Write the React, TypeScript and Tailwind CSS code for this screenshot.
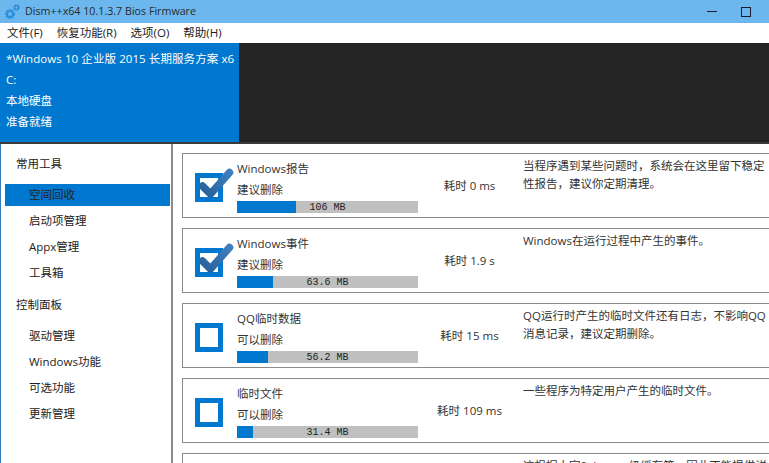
import React from 'react';

const font = { fontFamily: '"Open Sans", "Noto Sans CJK SC", sans-serif' };

const tools = ['空间回收', '启动项管理', 'Appx管理', '工具箱'];
const panel = ['驱动管理', 'Windows功能', '可选功能', '更新管理'];

const items = [
  { title: 'Windows报告', state: '建议删除', size: '106 MB', fill: 59, time: '耗时 0 ms', checked: true, desc: ['当程序遇到某些问题时，系统会在这里留下稳定', '性报告，建议你定期清理。'] },
  { title: 'Windows事件', state: '建议删除', size: '63.6 MB', fill: 36, time: '耗时 1.9 s', checked: true, desc: ['Windows在运行过程中产生的事件。'] },
  { title: 'QQ临时数据', state: '可以删除', size: '56.2 MB', fill: 31, time: '耗时 15 ms', checked: false, desc: ['QQ运行时产生的临时文件还有日志，不影响QQ', '消息记录，建议定期删除。'] },
  { title: '临时文件', state: '可以删除', size: '31.4 MB', fill: 16, time: '耗时 109 ms', checked: false, desc: ['一些程序为特定用户产生的临时文件。'] },
  { title: '', state: '', size: '', fill: 0, time: '', checked: false, desc: ['这根据大家0ghz，一级缓存等，因此不能提供详'] },
];

function CheckBox({ checked }: { checked: boolean }) {
  return (
    <div className="relative w-[28px] h-[29px] border-[5px] border-[#0078d0] bg-white shrink-0">
      {checked && (
        <svg className="absolute left-[-4px] top-[-13px]" width="42" height="36" viewBox="0 0 42 36">
          <defs>
            <linearGradient id="tick" x1="0" y1="1" x2="1" y2="0">
              <stop offset="0" stopColor="#27619b" />
              <stop offset="1" stopColor="#3f7fbd" />
            </linearGradient>
          </defs>
          <path d="M6.5 21 L14.5 29 L33.5 7.5" fill="none" stroke="url(#tick)" strokeWidth="7.5" strokeLinecap="round" strokeLinejoin="round" />
        </svg>
      )}
    </div>
  );
}

function Card({ item }: { item: (typeof items)[number] }) {
  return (
    <div className="h-[65px] shrink-0 border border-[#8a8a8a] bg-white flex text-[#333]">
      <div className="w-[54px] pl-[12px] pt-[19px] shrink-0">
        {item.title && <CheckBox checked={item.checked} />}
      </div>
      <div className="w-[181px] shrink-0 pt-[6px]">
        <div className="h-[18px] leading-[18px]">{item.title}</div>
        <div className="h-[18px] leading-[18px] mt-[3px]">{item.state}</div>
        {item.size && (
          <div className="relative h-[12px] mt-[2px] bg-[#c0c0c0]">
            <div className="h-full bg-[#0078d0]" style={{ width: item.fill }} />
            <div className="absolute inset-0 text-center text-[10px] leading-[13px] text-[#222]" style={{ fontFamily: '"Liberation Mono", monospace' }}>
              {item.size}
            </div>
          </div>
        )}
      </div>
      <div className="w-[104px] shrink-0 flex items-center justify-center pt-[1px] pr-[1px]">{item.time}</div>
      <div className="flex-1 pt-[3px] leading-[18px] whitespace-nowrap pl-[1px]">
        {item.desc.map((line) => (
          <div key={line}>{line}</div>
        ))}
      </div>
    </div>
  );
}

export default function App() {
  return (
    <div className="w-[769px] h-[463px] overflow-hidden flex flex-col bg-white text-[11.5px]" style={font}>
      {/* title bar */}
      <div className="h-[23px] shrink-0 bg-[#6cb8ee] flex items-center text-[#2a2a2a]">
        <svg className="ml-[5px] shrink-0" width="15" height="15" viewBox="0 0 15 15">
          <circle cx="5" cy="10" r="3" fill="none" stroke="#2a8fdc" strokeWidth="2" />
          <circle cx="5" cy="10" r="4.4" fill="none" stroke="#2a8fdc" strokeWidth="1.4" strokeDasharray="1.6 1.6" />
          <circle cx="11.5" cy="3.5" r="1.9" fill="none" stroke="#2a8fdc" strokeWidth="1.5" />
          <circle cx="11.5" cy="3.5" r="3" fill="none" stroke="#2a8fdc" strokeWidth="1" strokeDasharray="1.2 1.2" />
        </svg>
        <span className="ml-[5px] text-[10.7px]">Dism++x64 10.1.3.7 Bios Firmware</span>
        <div className="ml-auto flex items-center mr-[18px]">
          <div className="w-[10px] h-[1.5px] bg-[#1a1a2a]" />
          <div className="ml-[24px] w-[10px] h-[10px] border-[1.5px] border-[#1a1a2a]" />
        </div>
      </div>

      {/* menu */}
      <div className="h-[20px] shrink-0 bg-white flex items-center pl-[7px] gap-[14px] text-[#222]">
        <span>文件(F)</span>
        <span>恢复功能(R)</span>
        <span>选项(O)</span>
        <span>帮助(H)</span>
      </div>

      {/* header */}
      <div className="h-[99px] shrink-0 flex bg-[#252525]">
        <div className="w-[239px] bg-[#0078d0] text-white pl-[6px] pt-[5px] leading-[21px] whitespace-nowrap overflow-hidden">
          <div className="tracking-[0.08px]">*Windows 10 企业版 2015 长期服务方案 x6</div>
          <div>C:</div>
          <div>本地硬盘</div>
          <div>准备就绪</div>
        </div>
      </div>

      <div className="h-[2px] shrink-0 bg-[#3a3a3a]" />

      <div className="flex-1 flex min-h-0">
        {/* sidebar */}
        <div className="w-[173px] shrink-0 border-l border-l-[#2f7fc0] border-r-2 border-r-[#8a8a8a] text-[#222] pt-[10px]">
          <div className="pl-[15px] h-[20px] leading-[20px]">常用工具</div>
          <div className="mt-[10px] flex flex-col">
            {tools.map((t, i) => (
              <div key={t} className={`ml-[4px] mr-[1px] pl-[24px] h-[22px] leading-[22px] mb-[4px] ${i === 0 ? 'bg-[#0078d0]' : ''}`}>
                {t}
              </div>
            ))}
          </div>
          <div className="pl-[15px] h-[20px] leading-[20px] mt-[7px]">控制面板</div>
          <div className="mt-[10px] flex flex-col">
            {panel.map((t) => (
              <div key={t} className="ml-[4px] pl-[24px] h-[22px] leading-[22px] mb-[4px]">
                {t}
              </div>
            ))}
          </div>
        </div>

        {/* list */}
        <div className="flex-1 min-w-0 overflow-hidden pl-[9px] pt-[9px] flex flex-col gap-[10px] -mr-[4px]">
          {items.map((item, i) => (
            <Card key={i} item={item} />
          ))}
        </div>
      </div>
    </div>
  );
}
